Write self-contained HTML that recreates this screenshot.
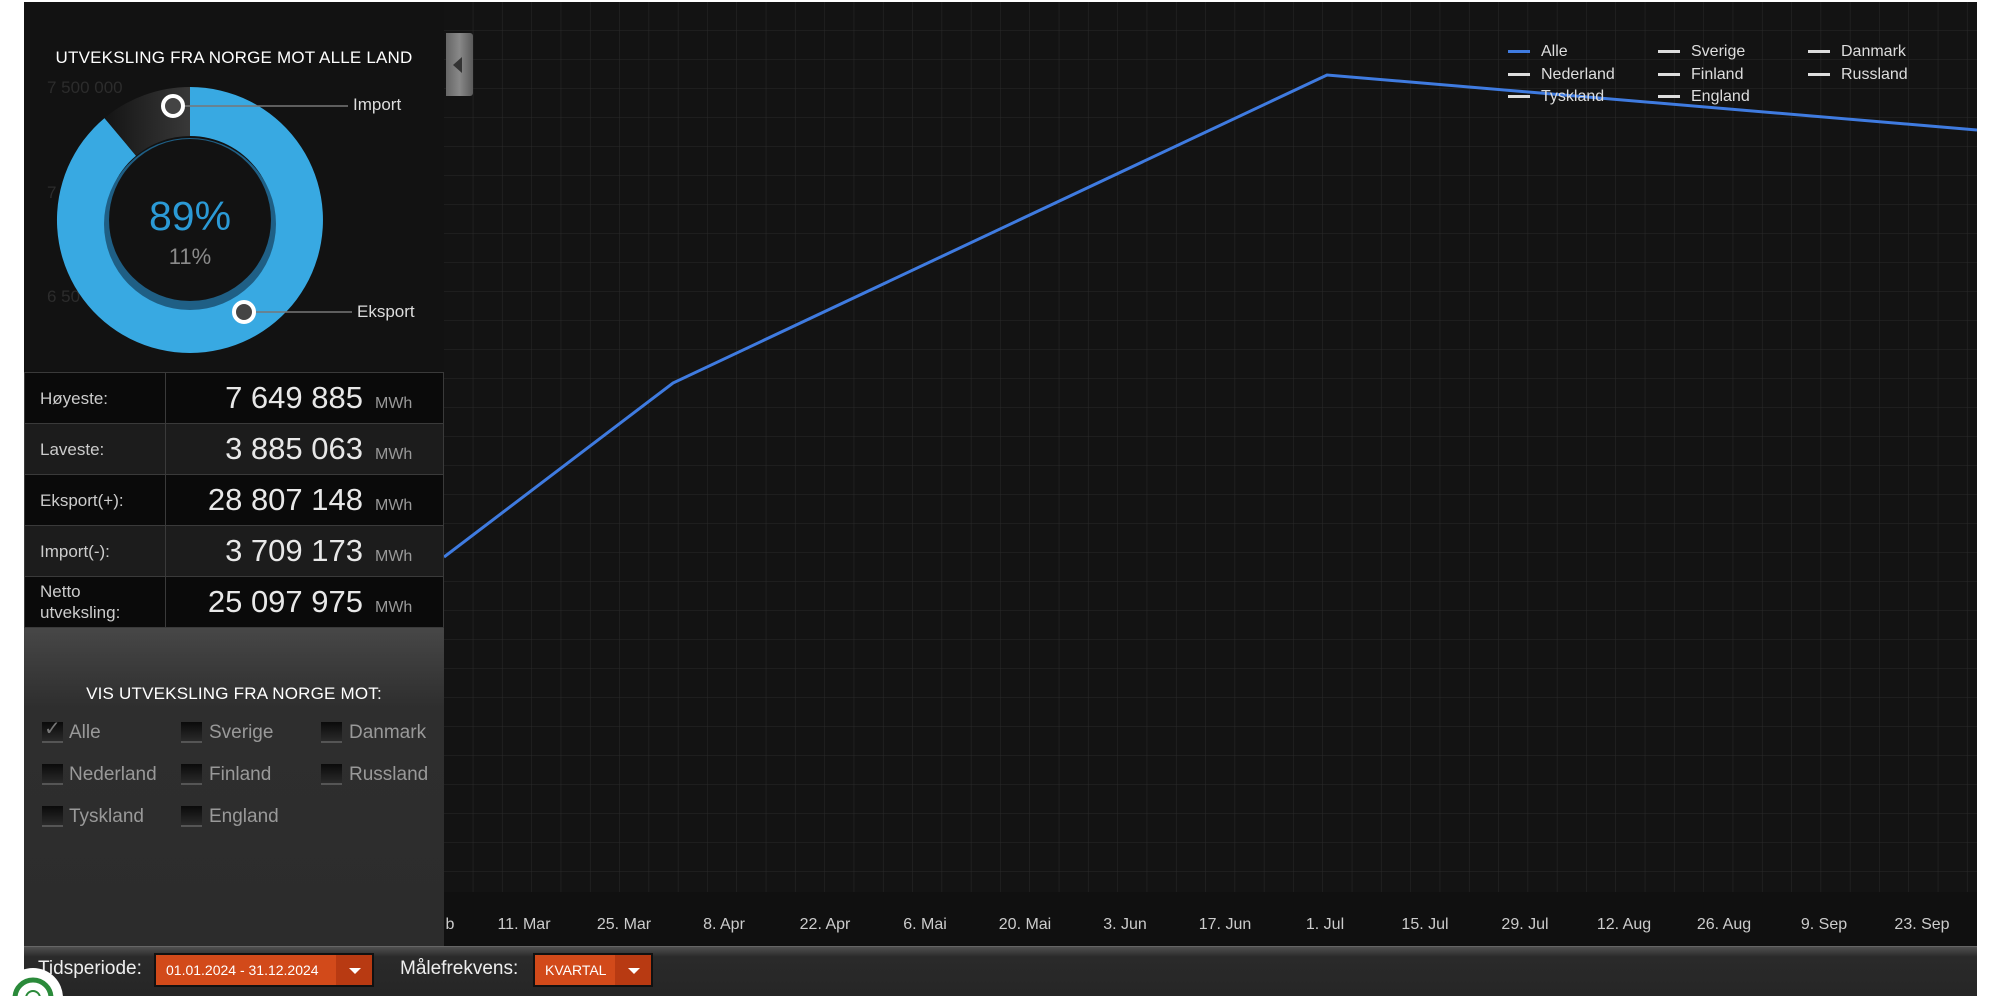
<!DOCTYPE html>
<html><head><meta charset="utf-8"><style>
*{margin:0;padding:0;box-sizing:border-box}
body{width:2000px;height:996px;background:#fff;position:relative;overflow:hidden;font-family:"Liberation Sans","DejaVu Sans",sans-serif}
.abs{position:absolute}
#left{left:24px;top:2px;width:420px;height:370px;background:#121212}
.title{color:#fff;font-size:17px;text-align:center;width:420px;left:24px;letter-spacing:0.2px}
table{position:absolute;left:24px;top:372px;width:420px;border-collapse:collapse}
td{height:51px;border:1px solid #3a3a3a;color:#ddd}
td.l{width:141px;font-size:17px;padding-left:15px;color:#ccc;line-height:21px}
td.v{text-align:right;padding-right:24px;font-size:31px;color:#e8e8e8;white-space:nowrap}
td.v span{font-size:16px;color:#999;margin-left:12px;display:inline-block;width:44px;text-align:left}
tr.a td{background:#0a0a0a} tr.b td{background:#1c1c1c}
#low{left:24px;top:628px;width:420px;height:318px;background:linear-gradient(#474747,#2e2e2e 25%,#2c2c2c)}
.cb{width:21px;height:21px;background:linear-gradient(#0a0a0a,#2a2a2a);border-bottom:2px solid #555}
.ct{color:#999;font-size:19px}
#bar{left:24px;top:946px;width:1953px;height:50px;background:linear-gradient(#505050,#2a2a2a 20%,#262626);border-top:1px solid #666}
.dd{height:34px;top:953px;background:#d24a1a;border:2px solid #111;color:#fff;font-size:14px;line-height:30px;padding-left:10px}
.dd .ar{position:absolute;right:0;top:0;height:30px;width:36px;background:#b83a12}
.dd .ar:after{content:"";position:absolute;left:13px;top:13px;border-left:6px solid transparent;border-right:6px solid transparent;border-top:6px solid #fff}
.bl{color:#eee;font-size:19px;top:958px}
.xl{color:#ccc;font-size:16px;top:916px;transform:translateX(-50%);white-space:nowrap}
.lg{color:#ddd;font-size:16px;white-space:nowrap}
.lg i{display:inline-block;width:22px;height:3px;background:#ddd;vertical-align:middle;margin-right:11px}
</style></head><body>
<svg class="abs" style="left:444px;top:2px" width="1533" height="944">
<defs><pattern id="g" width="29.3" height="29" patternUnits="userSpaceOnUse" x="0" y="0"><path d="M29.3 0V29M0 29H29.3" stroke="#2a2a2a" stroke-width="1" fill="none"/></pattern></defs>
<rect width="1533" height="944" fill="#131313"/>
<rect width="1533" height="890" fill="url(#g)"/>
<rect y="890" width="1533" height="54" fill="#101010"/>
<polyline points="0,555 229,381 883,73 1533,128" fill="none" stroke="#3f7be0" stroke-width="3"/>
</svg>
<div class="abs" style="left:446px;top:33px;width:27px;height:63px;background:linear-gradient(90deg,#666,#888 50%,#5a5a5a);border-radius:0 3px 3px 0"></div>
<div class="abs" style="left:453px;top:57px;border-top:8px solid transparent;border-bottom:8px solid transparent;border-right:9px solid #333"></div>
<div class="abs lg" style="left:1508px;top:43px"><i style="background:#3f7be0"></i>Alle</div>
<div class="abs lg" style="left:1658px;top:43px"><i></i>Sverige</div>
<div class="abs lg" style="left:1808px;top:43px"><i></i>Danmark</div>
<div class="abs lg" style="left:1508px;top:66px"><i></i>Nederland</div>
<div class="abs lg" style="left:1658px;top:66px"><i></i>Finland</div>
<div class="abs lg" style="left:1808px;top:66px"><i></i>Russland</div>
<div class="abs lg" style="left:1508px;top:88px"><i></i>Tyskland</div>
<div class="abs lg" style="left:1658px;top:88px"><i></i>England</div>
<div class="abs xl" style="left:450px">b</div>
<div class="abs xl" style="left:524px">11. Mar</div>
<div class="abs xl" style="left:624px">25. Mar</div>
<div class="abs xl" style="left:724px">8. Apr</div>
<div class="abs xl" style="left:825px">22. Apr</div>
<div class="abs xl" style="left:925px">6. Mai</div>
<div class="abs xl" style="left:1025px">20. Mai</div>
<div class="abs xl" style="left:1125px">3. Jun</div>
<div class="abs xl" style="left:1225px">17. Jun</div>
<div class="abs xl" style="left:1325px">1. Jul</div>
<div class="abs xl" style="left:1425px">15. Jul</div>
<div class="abs xl" style="left:1525px">29. Jul</div>
<div class="abs xl" style="left:1624px">12. Aug</div>
<div class="abs xl" style="left:1724px">26. Aug</div>
<div class="abs xl" style="left:1824px">9. Sep</div>
<div class="abs xl" style="left:1922px">23. Sep</div>

<div id="left" class="abs"></div>
<div class="abs title" style="top:48px">UTVEKSLING FRA NORGE MOT ALLE LAND</div>
<svg class="abs" style="left:0;top:0" width="444" height="372">
<defs><linearGradient id="d" x1="0" y1="0" x2="1" y2="0"><stop offset="0" stop-color="#141414"/><stop offset="1" stop-color="#383838"/></linearGradient></defs>
<text x="47" y="93" fill="#2c2c2c" font-size="17" font-family="Liberation Sans">7 500 000</text>
<text x="47" y="198" fill="#2c2c2c" font-size="17" font-family="Liberation Sans">7</text>
<text x="47" y="302" fill="#2c2c2c" font-size="17" font-family="Liberation Sans">6 50</text>
<path d="M190,87 A133,133 0 1 1 104.5,118.1 L136,155.7 A84,84 0 1 0 190,136 Z" fill="#38a9e2"/>
<path d="M104.5,118.1 A133,133 0 0 1 190,87 L190,136 A84,84 0 0 0 136,155.7 Z" fill="url(#d)"/>
<circle cx="190" cy="224" r="86" fill="#1f5f85"/>
<circle cx="190" cy="220" r="81" fill="#121212"/>
<text x="190" y="230" fill="#2b9ad6" font-size="41" text-anchor="middle" font-family="Liberation Sans">89%</text>
<text x="190" y="264" fill="#8a8a8a" font-size="22" text-anchor="middle" font-family="Liberation Sans">11%</text>
<line x1="183" y1="106" x2="348" y2="106" stroke="#777" stroke-width="1.5"/>
<line x1="254" y1="312" x2="352" y2="312" stroke="#777" stroke-width="1.5"/>
<circle cx="173" cy="106" r="10" fill="#444" stroke="#fff" stroke-width="4"/>
<circle cx="244" cy="312" r="10" fill="#444" stroke="#fff" stroke-width="4"/>
<text x="353" y="110" fill="#ddd" font-size="17" font-family="Liberation Sans">Import</text>
<text x="357" y="317" fill="#ddd" font-size="17" font-family="Liberation Sans">Eksport</text>
</svg>
<table>
<tr class="a"><td class="l">Høyeste:</td><td class="v">7 649 885<span>MWh</span></td></tr>
<tr class="b"><td class="l">Laveste:</td><td class="v">3 885 063<span>MWh</span></td></tr>
<tr class="a"><td class="l">Eksport(+):</td><td class="v">28 807 148<span>MWh</span></td></tr>
<tr class="b"><td class="l">Import(-):</td><td class="v">3 709 173<span>MWh</span></td></tr>
<tr class="a"><td class="l">Netto<br>utveksling:</td><td class="v">25 097 975<span>MWh</span></td></tr>
</table>
<div id="low" class="abs"></div>
<div class="abs title" style="top:684px">VIS UTVEKSLING FRA NORGE MOT:</div>
<div class="abs cb" style="left:42px;top:722px"></div><div class="abs" style="left:44px;top:716px;color:#777;font-size:20px">✓</div><div class="abs ct" style="left:69px;top:722px">Alle</div>
<div class="abs cb" style="left:181px;top:722px"></div><div class="abs ct" style="left:209px;top:722px">Sverige</div>
<div class="abs cb" style="left:321px;top:722px"></div><div class="abs ct" style="left:349px;top:722px">Danmark</div>
<div class="abs cb" style="left:42px;top:764px"></div><div class="abs ct" style="left:69px;top:764px">Nederland</div>
<div class="abs cb" style="left:181px;top:764px"></div><div class="abs ct" style="left:209px;top:764px">Finland</div>
<div class="abs cb" style="left:321px;top:764px"></div><div class="abs ct" style="left:349px;top:764px">Russland</div>
<div class="abs cb" style="left:42px;top:806px"></div><div class="abs ct" style="left:69px;top:806px">Tyskland</div>
<div class="abs cb" style="left:181px;top:806px"></div><div class="abs ct" style="left:209px;top:806px">England</div>
<div id="bar" class="abs"></div>
<div class="abs bl" style="left:38px">Tidsperiode:</div>
<div class="abs dd" style="left:154px;width:220px">01.01.2024 - 31.12.2024<div class="ar"></div></div>
<div class="abs bl" style="left:400px">Målefrekvens:</div>
<div class="abs dd" style="left:533px;width:120px">KVARTAL<div class="ar"></div></div>
<svg class="abs" style="left:0;top:965px" width="70" height="31"><circle cx="33" cy="33" r="30" fill="#fff"/><circle cx="33" cy="33" r="18" fill="none" stroke="#2a8a3a" stroke-width="5"/><circle cx="33" cy="33" r="7" fill="none" stroke="#2a8a3a" stroke-width="2"/></svg>
</body></html>
